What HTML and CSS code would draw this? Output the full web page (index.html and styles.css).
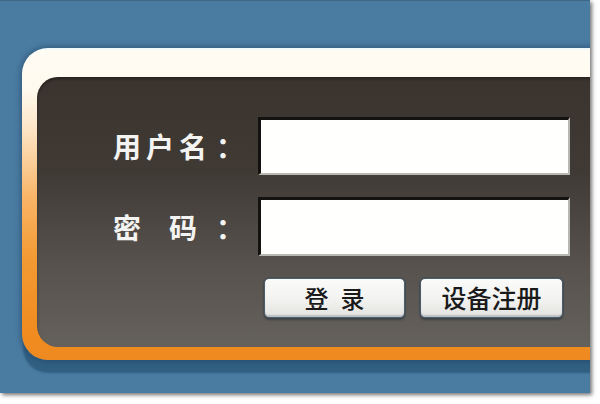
FILE: index.html
```html
<!DOCTYPE html>
<html lang="zh-CN">
<head>
<meta charset="utf-8">
<title>登录</title>
<link rel="stylesheet" href="styles.css">
</head>
<body>
<div class="shot">
  <div class="panel">
    <div class="inner">
      <form class="form">
        <label class="label" for="u">用户名<span class="colon">：</span></label>
        <input class="field" id="u" type="text">
        <label class="label" for="p"><span class="gap">密</span>码<span class="colon colon-wide">：</span></label>
        <input class="field" id="p" type="password">
        <div class="actions">
          <button type="button" class="btn btn-login">登<span class="sp"></span>录</button>
          <button type="button" class="btn btn-reg">设备注册</button>
        </div>
      </form>
    </div>
  </div>
</div>
</body>
</html>
```
FILE: styles.css
```css
* { box-sizing: border-box; }
html, body { margin: 0; padding: 0; background: #ffffff; }
body {
  width: 600px;
  height: 404px;
  overflow: hidden;
  font-family: "Noto Sans CJK SC", "Noto Sans", sans-serif;
}
.shot {
  width: 590px;
  height: 393px;
  overflow: hidden;
  background: #4a7ba1;
  border-top: 1px solid #3d6888;
  padding: 47px 0 0 22px;
  box-shadow: 2px 2px 4px rgba(0, 0, 0, 0.55);
}
.panel {
  width: 640px;
  height: 312px;
  border-radius: 26px 0 0 26px;
  padding: 29px 0 13px 15px;
  background: linear-gradient(to bottom,
    #eef8fb 0px, #fffcf3 3px, #fffaf0 40px, #fde6c8 80px, #f9b466 150px, #f39a33 210px, #f08c20 280px, #ee8a1f 312px);
  box-shadow: 0 0 5px 2px rgba(30, 65, 95, 0.45), 0 14px 2px -1px rgba(40, 85, 120, 0.75);
}
.inner {
  height: 270px;
  border-radius: 21px 0 0 21px;
  background: linear-gradient(to bottom, #3a332e 0%, #403a35 35%, #57524e 70%, #65615d 100%);
  box-shadow: inset 0 2px 3px rgba(0, 0, 0, 0.35);
  padding-top: 40px;
}
.form {
  display: grid;
  grid-template-columns: 221px 312px;
  grid-template-rows: 58px 59px 40px;
  row-gap: 22px;
  align-items: center;
}
.label {
  justify-self: end;
  padding-right: 9px;
  color: #f3f3f1;
  font-weight: bold;
  font-size: 28px;
  letter-spacing: 5px;
  line-height: 1;
}
.colon { margin-left: 4px; }
.colon-wide { margin-left: 14px; }
.gap { margin-right: 23px; }
.field {
  width: 312px;
  height: 100%;
  margin: 0;
  border-style: solid;
  border-width: 3px 2px 2px 3px;
  border-color: #141210 #b9b7b2 #b9b7b2 #141210;
  background: #fffffd;
  outline: none;
}
.actions {
  grid-column: 2;
  display: flex;
  gap: 15px;
  padding-left: 6px;
  height: 40px;
  margin-top: -1px;
}
.btn {
  height: 40px;
  margin: 0;
  padding: 0;
  border: 1px solid #4f5e6b;
  border-radius: 5px;
  background: linear-gradient(to bottom, #fbfbf9 0%, #f2f2f0 55%, #e2e2df 100%);
  box-shadow: 0 0 0 1px rgba(60, 72, 84, 0.55), inset 0 -2px 1px rgba(120, 130, 140, 0.35), 0 2px 2px rgba(30, 40, 50, 0.5);
  color: #1a1a1a;
  font-family: "Noto Sans CJK SC", "Noto Sans", sans-serif;
  font-weight: 500;
  font-size: 24px;
  line-height: 1;
}
.btn-login { width: 141px; }
.btn-reg { width: 143px; font-size: 25px; }
.sp { display: inline-block; width: 12px; }
```
